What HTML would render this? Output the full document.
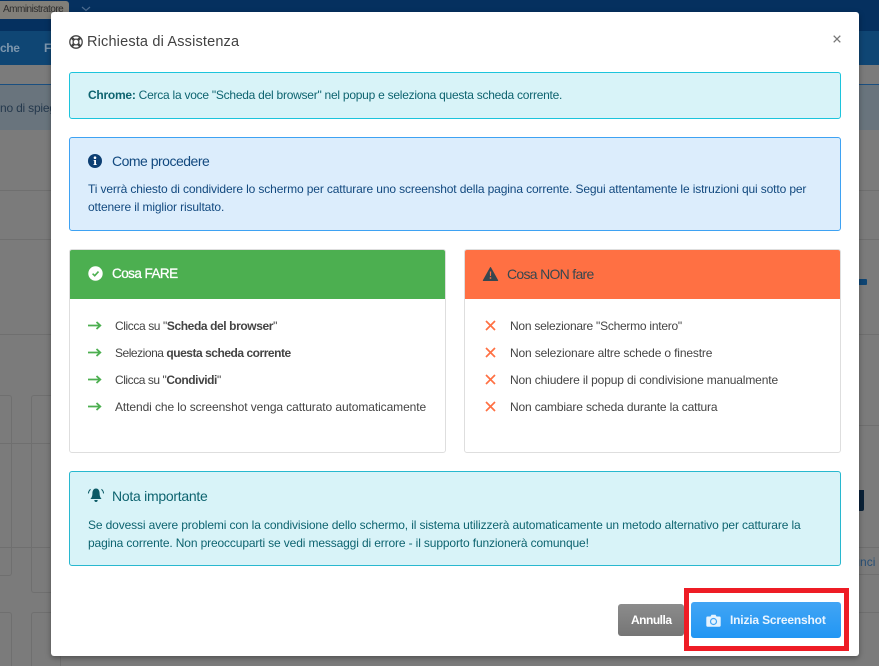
<!DOCTYPE html>
<html><head><meta charset="utf-8"><style>
html,body{margin:0;padding:0;width:879px;height:666px;overflow:hidden}
body{position:relative;background:#7b7b7b;font-family:"Liberation Sans",sans-serif;color:#444}
.a{position:absolute;box-sizing:border-box}
.t{position:absolute;white-space:nowrap;line-height:18px}
svg{position:absolute;overflow:visible}
</style></head><body>
<!-- background -->
<div class="a" style="left:0;top:0;width:879px;height:31px;background:#05305f"></div>
<div class="a" style="left:0;top:1px;width:69px;height:18px;background:#817f79;border-radius:0 3px 3px 0"></div>
<div class="t" style="left:3px;top:1px;font-size:10px;letter-spacing:-.5px;color:#2d2d2d">Amministratore</div>
<svg style="left:81px;top:6px" width="10" height="6"><path d="M1 1L5 4.5L9 1" fill="none" stroke="#4d6c90" stroke-width="1.2"/></svg>
<div class="a" style="left:0;top:31px;width:879px;height:34px;background:#0f4674"></div>
<div class="t" style="left:0;top:39px;font-size:12px;font-weight:bold;letter-spacing:-.4px;color:#7d96ad">che</div>
<div class="t" style="left:44px;top:39px;font-size:12px;font-weight:bold;color:#7d96ad">F</div>
<div class="a" style="left:0;top:65px;width:879px;height:20px;background:#7b7b7b;border-bottom:1px solid #1a4f80"></div>
<div class="a" style="left:0;top:85px;width:879px;height:45px;background:#69747d"></div>
<div class="t" style="left:0;top:99px;font-size:12px;letter-spacing:-.2px;color:#25394d">no di spiegazione</div>
<div class="a" style="left:0;top:190px;width:879px;height:1px;background:#6f6f6f"></div>
<div class="a" style="left:0;top:239px;width:879px;height:1px;background:#6f6f6f"></div>
<div class="a" style="left:0;top:334px;width:879px;height:1px;background:#6f6f6f"></div>
<div class="a" style="left:858px;top:279px;width:9px;height:6px;background:#0f4674;border-radius:1px"></div>
<div class="a" style="left:840px;top:425px;width:39px;height:1px;background:#6f6f6f"></div>
<div class="a" style="left:840px;top:547px;width:39px;height:1px;background:#6f6f6f"></div>
<div class="a" style="left:840px;top:574px;width:39px;height:1px;background:#6f6f6f"></div>
<div class="a" style="left:840px;top:612px;width:39px;height:1px;background:#6f6f6f"></div>
<div class="a" style="left:856px;top:490px;width:8px;height:21px;background:#0b2238;border-radius:0 0 2px 2px"></div>
<div class="a" style="left:840px;top:553px;width:39px;height:18px;overflow:hidden"><div class="t" style="left:0;top:0;font-size:12px;color:#274f76">nnunci</div></div>
<div class="a" style="left:-3px;top:395px;width:15px;height:181px;border:1px solid #6f6f6f;border-radius:3px"></div>
<div class="a" style="left:31px;top:395px;width:30px;height:198px;border:1px solid #6f6f6f;border-radius:3px"></div>
<div class="a" style="left:0;top:443px;width:50px;height:1px;background:#6f6f6f"></div>
<div class="a" style="left:0;top:547px;width:50px;height:1px;background:#6f6f6f"></div>
<div class="a" style="left:-3px;top:612px;width:15px;height:54px;border:1px solid #6f6f6f;border-bottom:0;border-radius:3px 3px 0 0"></div>
<div class="a" style="left:31px;top:612px;width:30px;height:54px;border:1px solid #6f6f6f;border-bottom:0;border-radius:3px 3px 0 0"></div>

<!-- modal -->
<div class="a" style="left:51px;top:12px;width:808px;height:644px;background:#fff;border-radius:3px;box-shadow:0 2px 6px rgba(0,0,0,.35)"></div>

<svg style="left:69px;top:35px" width="14" height="14" viewBox="0 0 14 14"><circle cx="7" cy="7" r="6.2" fill="none" stroke="#444" stroke-width="1.3"/><circle cx="7" cy="7" r="2.9" fill="none" stroke="#444" stroke-width="1.3"/><path d="M2.8 2.8L5 5M11.2 2.8L9 5M2.8 11.2L5 9M11.2 11.2L9 9" stroke="#444" stroke-width="2.6"/></svg>
<div class="t" style="left:87px;top:33px;font-size:14.5px;letter-spacing:.17px;color:#424242">Richiesta di Assistenza</div>
<svg style="left:833px;top:35px" width="8" height="8"><path d="M.7.7L7.3 7.3M7.3.7L.7 7.3" stroke="#777" stroke-width="1.3"/></svg>

<!-- chrome -->
<div class="a" style="left:69px;top:72px;width:772px;height:47px;background:#d8f3f8;border:1px solid #1cc4dc;border-radius:3px"></div>
<div class="t" style="left:88px;top:86px;font-size:12px;letter-spacing:-.25px;color:#0e6470"><b>Chrome:</b> Cerca la voce "Scheda del browser" nel popup e seleziona questa scheda corrente.</div>

<!-- come procedere -->
<div class="a" style="left:69px;top:137px;width:772px;height:94px;background:#dcedfc;border:1px solid #3ea2f3;border-radius:3px"></div>
<svg style="left:88px;top:154px" width="14" height="14" viewBox="0 0 14 14"><circle cx="7" cy="7" r="7" fill="#0d3f73"/><circle cx="7" cy="3.7" r="1.3" fill="#fff"/><path d="M5.6 6H8V10.2H8.8V11H5.4V10.2H6.2V6.8H5.6Z" fill="#fff"/></svg>
<div class="t" style="left:112px;top:152px;font-size:14px;letter-spacing:-.5px;color:#12497f">Come procedere</div>
<div class="t" style="left:88px;top:180px;font-size:12px;letter-spacing:-.13px;color:#12497f">Ti verrà chiesto di condividere lo schermo per catturare uno screenshot della pagina corrente. Segui attentamente le istruzioni qui sotto per</div>
<div class="t" style="left:88px;top:198px;font-size:12px;letter-spacing:-.13px;color:#12497f">ottenere il miglior risultato.</div>

<!-- fare -->
<div class="a" style="left:69px;top:249px;width:377px;height:204px;background:#fff;border:1px solid #dedede;border-radius:3px"></div>
<div class="a" style="left:70px;top:250px;width:375px;height:49px;background:#4caf50;border-radius:2px 2px 0 0"></div>
<svg style="left:88px;top:266px" width="15" height="15" viewBox="0 0 15 15"><circle cx="7.5" cy="7.5" r="7.2" fill="#fff"/><path d="M4.6 7.7L6.7 9.7L10.5 5.6" fill="none" stroke="#4caf50" stroke-width="1.6"/></svg>
<div class="t" style="left:112px;top:265px;font-size:13.5px;letter-spacing:-.55px;color:#fff;-webkit-text-stroke:.3px #fff">Cosa FARE</div>
<svg style="left:88px;top:320px" width="14" height="11"><path d="M0 5.5H12M8.5 2L12.3 5.5L8.5 9" fill="none" stroke="#4caf50" stroke-width="1.8"/></svg>
<svg style="left:88px;top:347px" width="14" height="11"><path d="M0 5.5H12M8.5 2L12.3 5.5L8.5 9" fill="none" stroke="#4caf50" stroke-width="1.8"/></svg>
<svg style="left:88px;top:374px" width="14" height="11"><path d="M0 5.5H12M8.5 2L12.3 5.5L8.5 9" fill="none" stroke="#4caf50" stroke-width="1.8"/></svg>
<svg style="left:88px;top:401px" width="14" height="11"><path d="M0 5.5H12M8.5 2L12.3 5.5L8.5 9" fill="none" stroke="#4caf50" stroke-width="1.8"/></svg>
<div class="t" style="left:115px;top:317px;font-size:12px;letter-spacing:-.4px">Clicca su "<b>Scheda del browser</b>"</div>
<div class="t" style="left:115px;top:344px;font-size:12px;letter-spacing:-.47px">Seleziona <b>questa scheda corrente</b></div>
<div class="t" style="left:115px;top:371px;font-size:12px;letter-spacing:-.45px">Clicca su "<b>Condividi</b>"</div>
<div class="t" style="left:115px;top:398px;font-size:12px;letter-spacing:-.09px">Attendi che lo screenshot venga catturato automaticamente</div>

<!-- non fare -->
<div class="a" style="left:464px;top:249px;width:377px;height:204px;background:#fff;border:1px solid #dedede;border-radius:3px"></div>
<div class="a" style="left:465px;top:250px;width:375px;height:49px;background:#ff7043;border-radius:2px 2px 0 0"></div>
<svg style="left:483px;top:267px" width="15" height="14" viewBox="0 0 15 14"><path d="M7.5 0.5L14.7 13.5H0.3Z" fill="#37474f" stroke="#37474f" stroke-linejoin="round"/><path d="M6.8 4.5H8.2L8 9H7Z" fill="#ff7043"/><circle cx="7.5" cy="11" r=".9" fill="#ff7043"/></svg>
<div class="t" style="left:507px;top:265px;font-size:14px;letter-spacing:-.7px;color:#37474f">Cosa NON fare</div>
<svg style="left:485px;top:320px" width="11" height="11"><path d="M1 1L10 10M10 1L1 10" stroke="#ff7043" stroke-width="1.7"/></svg>
<svg style="left:485px;top:347px" width="11" height="11"><path d="M1 1L10 10M10 1L1 10" stroke="#ff7043" stroke-width="1.7"/></svg>
<svg style="left:485px;top:374px" width="11" height="11"><path d="M1 1L10 10M10 1L1 10" stroke="#ff7043" stroke-width="1.7"/></svg>
<svg style="left:485px;top:401px" width="11" height="11"><path d="M1 1L10 10M10 1L1 10" stroke="#ff7043" stroke-width="1.7"/></svg>
<div class="t" style="left:510px;top:317px;font-size:12px;letter-spacing:-.25px">Non selezionare "Schermo intero"</div>
<div class="t" style="left:510px;top:344px;font-size:12px;letter-spacing:-.15px">Non selezionare altre schede o finestre</div>
<div class="t" style="left:510px;top:371px;font-size:12px;letter-spacing:-.14px">Non chiudere il popup di condivisione manualmente</div>
<div class="t" style="left:510px;top:398px;font-size:12px;letter-spacing:-.16px">Non cambiare scheda durante la cattura</div>

<!-- nota -->
<div class="a" style="left:69px;top:471px;width:772px;height:95px;background:#d8f3f8;border:1px solid #28b8cf;border-radius:3px"></div>
<svg style="left:88px;top:488px" width="16" height="15" viewBox="0 0 16 15"><path d="M8 .5C5.4.5 4.4 3 4.4 5.5C4.4 8.5 3.3 10 2.4 11H13.6C12.7 10 11.6 8.5 11.6 5.5C11.6 3 10.6.5 8 .5Z" fill="#0b5a66"/><path d="M6.3 12H9.7C9.7 13.2 9 14 8 14S6.3 13.2 6.3 12Z" fill="#0b5a66"/><path d="M2.5 1.3C1.3 2.4.6 3.7.4 5.4M13.5 1.3C14.7 2.4 15.4 3.7 15.6 5.4" fill="none" stroke="#0b5a66" stroke-width="1"/></svg>
<div class="t" style="left:112px;top:487px;font-size:14px;letter-spacing:-.27px;color:#0e6470">Nota importante</div>
<div class="t" style="left:88px;top:516px;font-size:12px;letter-spacing:-.125px;color:#0e6470">Se dovessi avere problemi con la condivisione dello schermo, il sistema utilizzerà automaticamente un metodo alternativo per catturare la</div>
<div class="t" style="left:88px;top:534px;font-size:12px;letter-spacing:-.135px;color:#0e6470">pagina corrente. Non preoccuparti se vedi messaggi di errore - il supporto funzionerà comunque!</div>

<!-- buttons -->
<div class="a" style="left:618px;top:604px;width:66px;height:32px;background:linear-gradient(#8c8c8c,#757575);border-radius:3px"></div>
<div class="t" style="left:631px;top:611px;font-size:12px;font-weight:bold;letter-spacing:-.5px;color:#fff">Annulla</div>
<div class="a" style="left:684px;top:588px;width:165px;height:63px;border:5px solid #ee1c25"></div>
<div class="a" style="left:691px;top:602px;width:150px;height:36px;background:linear-gradient(#42a5f5,#2196f3);border-radius:3px"></div>
<svg style="left:706px;top:614px" width="15" height="13" viewBox="0 0 15 13"><path d="M1.5 2.5H4.5L5.5 .8H9.5L10.5 2.5H13.5A1.2 1.2 0 0 1 14.7 3.7V11.5A1.2 1.2 0 0 1 13.5 12.7H1.5A1.2 1.2 0 0 1 .3 11.5V3.7A1.2 1.2 0 0 1 1.5 2.5Z" fill="#e6f3fe"/><circle cx="7.5" cy="7.5" r="3" fill="none" stroke="#42a5f5" stroke-width="1.2"/></svg>
<div class="t" style="left:730px;top:611px;font-size:12px;font-weight:bold;letter-spacing:-.18px;color:#eaf5ff">Inizia Screenshot</div>
</body></html>
